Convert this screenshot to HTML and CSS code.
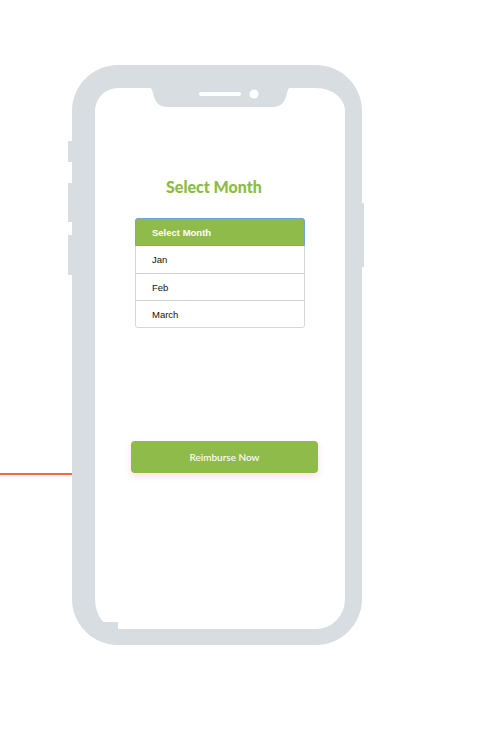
FILE: index.html
```html
<!DOCTYPE html>
<html>
<head>
<meta charset="utf-8">
<link rel="stylesheet" href="styles.css">
</head>
<body>
<div class="stage">
  <div class="connector"></div>
  <div class="phone">
    <span class="side-btn side-l1"></span>
    <span class="side-btn side-l2"></span>
    <span class="side-btn side-l3"></span>
    <span class="side-btn side-r1"></span>
    <svg class="notch" width="146" height="21" viewBox="0 0 146 21">
      <path d="M0 0 C4 0 5 2 6 6 C8 15 12 20 20 20 L126 20 C134 20 138 15 140 6 C141 2 142 0 146 0 Z" fill="#d8dde1"/>
      <rect x="52" y="5" width="42" height="4" rx="2" fill="#fff"/>
      <circle cx="107" cy="7" r="4.5" fill="#fff"/>
    </svg>
    <span class="corner-glitch"></span>
    <h1 class="title">Select Month</h1>
    <div class="month-list">
      <div class="month-head">Select Month</div>
      <div class="month-row">Jan</div>
      <div class="month-row">Feb</div>
      <div class="month-row">March</div>
    </div>
    <button class="cta">Reimburse Now</button>
  </div>
</div>
</body>
</html>
```

FILE: styles.css
```css
html, body {
  margin: 0;
  padding: 0;
  background: #ffffff;
}
.stage {
  position: relative;
  padding: 65px 0 0 72px;
  height: 744px;
  box-sizing: border-box;
}
.connector {
  position: absolute;
  left: 0;
  top: 473px;
  width: 72px;
  height: 2px;
  background: #f26b3b;
}
.phone {
  position: relative;
  width: 290px;
  height: 580px;
  box-sizing: border-box;
  border-style: solid;
  border-color: #d8dde1;
  border-width: 23px 17px 16px 23px;
  border-radius: 46px;
  background: #fff;
  display: flex;
  flex-direction: column;
  align-items: flex-start;
}
.side-btn {
  position: absolute;
  background: #d8dde1;
  width: 4px;
}
.side-l1 { left: -27px; top: 53px; height: 21px; }
.side-l2 { left: -27px; top: 95px; height: 39px; }
.side-l3 { left: -27px; top: 147px; height: 40px; }
.side-r1 { right: -19px; top: 115px; height: 64px; width: 3px; }
.notch {
  position: absolute;
  left: 52px;
  top: -1px;
}
.corner-glitch {
  position: absolute;
  left: 0;
  bottom: 0;
  width: 23px;
  height: 7px;
  background: #d8dde1;
}
.title {
  margin: 89px 0 0 71px;
  font-family: Lato, "Open Sans", sans-serif;
  font-weight: 900;
  font-size: 16px;
  line-height: 20px;
  color: #8cbb45;
}
.month-list {
  margin: 21px 0 0 40px;
  width: 170px;
  box-sizing: border-box;
  border: 1px solid #d6d6d6;
  border-radius: 3px;
  font-family: "Liberation Sans", Arial, sans-serif;
  font-size: 9.5px;
}
.month-head {
  margin: -1px -1px 0 -1px;
  height: 28px;
  box-sizing: border-box;
  border: 1px solid #72a2d6;
  border-radius: 3px 3px 0 0;
  background: #8fbb4a;
  color: #fff;
  font-weight: 700;
  padding-left: 16px;
  display: flex;
  align-items: center;
}
.month-row {
  height: 27px;
  box-sizing: border-box;
  padding-left: 16px;
  display: flex;
  align-items: center;
  color: #111;
}
.month-row + .month-row {
  border-top: 1px solid #d3d3d3;
}
.cta {
  margin: 113px 0 0 36px;
  width: 187px;
  height: 32px;
  border: none;
  border-radius: 4px;
  background: #8fbb4a;
  color: #fff;
  font-family: Lato, "Open Sans", sans-serif;
  font-size: 10px;
  font-weight: 500;
  box-shadow: 0 3px 7px rgba(240, 110, 90, 0.22);
  padding: 0;
}
```
